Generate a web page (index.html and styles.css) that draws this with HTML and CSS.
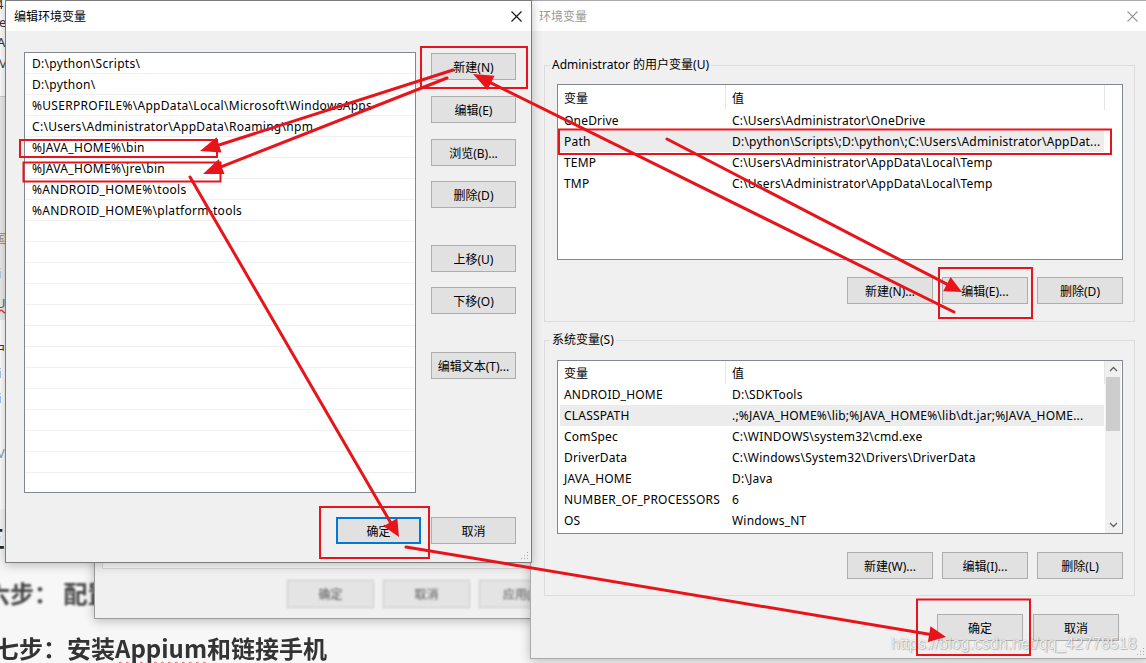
FILE: index.html
```html
<!DOCTYPE html>
<html lang="zh-CN">
<head>
    <meta charset="UTF-8">
    <title>环境变量</title>
    <link rel="stylesheet" href="styles.css">
</head>
<body>
<div class="desk">
    <!-- blog page that sits behind the dialogs -->
    <div class="page">
        <div class="strip">
            <span class="frag f1">4</span>
            <span class="frag f2">re</span>
            <span class="frag f3">A</span>
            <span class="frag f4">M</span>
            <span class="frag f5">国</span>
            <span class="frag f6">i</span>
            <span class="frag f7">U</span>
            <span class="frag f8">中</span>
            <span class="frag f9">i</span>
            <span class="frag f10">i</span>
            <span class="frag f11">V</span>
        </div>
        <h3 class="step s5">五</h3>
        <h3 class="step s6">六步： 配置</h3>
        <h3 class="step s7">七步：安装<span class="typo">Appium</span>和链接手机</h3>
    </div>

    <!-- 系统属性 window, mostly hidden -->
    <div class="win sys-win">
        <div class="sys-panel"></div>
        <div class="sys-foot">
            <button class="btn">确定</button>
            <button class="btn">取消</button>
            <button class="btn">应用(A)</button>
        </div>
    </div>

    <!-- 环境变量 -->
    <div class="win env-win">
        <div class="titlebar inactive">
            <span class="title">环境变量</span>
            <svg class="close" width="11" height="11" viewBox="0 0 11 11"><path d="M0.5 0.5L10.5 10.5M10.5 0.5L0.5 10.5"/></svg>
        </div>
        <div class="env-body">
            <fieldset class="group g-user">
                <legend>Administrator 的用户变量(U)</legend>
                <div class="lv lv-user">
                    <div class="lv-main">
                        <div class="lv-head"><span class="h1">变量</span><span class="h2">值</span></div>
                        <div class="lv-row"><span class="c1">OneDrive</span><span class="c2">C:\Users\Administrator\OneDrive</span></div>
                        <div class="lv-row sel"><span class="c1">Path</span><span class="c2">D:\python\Scripts\;D:\python\;C:\Users\Administrator\AppDat...</span></div>
                        <div class="lv-row"><span class="c1">TEMP</span><span class="c2">C:\Users\Administrator\AppData\Local\Temp</span></div>
                        <div class="lv-row"><span class="c1">TMP</span><span class="c2">C:\Users\Administrator\AppData\Local\Temp</span></div>
                    </div>
                </div>
                <div class="btn-row">
                    <button class="btn w86">新建(N)...</button>
                    <button class="btn w86">编辑(E)...</button>
                    <button class="btn w86">删除(D)</button>
                </div>
            </fieldset>

            <fieldset class="group g-sys">
                <legend>系统变量(S)</legend>
                <div class="lv lv-sys">
                    <div class="lv-main">
                        <div class="lv-head"><span class="h1">变量</span><span class="h2">值</span></div>
                        <div class="lv-row"><span class="c1">ANDROID_HOME</span><span class="c2">D:\SDKTools</span></div>
                        <div class="lv-row sel"><span class="c1">CLASSPATH</span><span class="c2">.;%JAVA_HOME%\lib;%JAVA_HOME%\lib\dt.jar;%JAVA_HOME...</span></div>
                        <div class="lv-row"><span class="c1">ComSpec</span><span class="c2">C:\WINDOWS\system32\cmd.exe</span></div>
                        <div class="lv-row"><span class="c1">DriverData</span><span class="c2">C:\Windows\System32\Drivers\DriverData</span></div>
                        <div class="lv-row"><span class="c1">JAVA_HOME</span><span class="c2">D:\Java</span></div>
                        <div class="lv-row"><span class="c1">NUMBER_OF_PROCESSORS</span><span class="c2">6</span></div>
                        <div class="lv-row"><span class="c1">OS</span><span class="c2">Windows_NT</span></div>
                    </div>
                    <div class="vscroll">
                        <div class="arrow"><svg width="9" height="6" viewBox="0 0 9 6"><path d="M1 5L4.5 1.5L8 5"/></svg></div>
                        <div class="track"><div class="thumb"></div></div>
                        <div class="arrow"><svg width="9" height="6" viewBox="0 0 9 6"><path d="M1 1L4.5 4.5L8 1"/></svg></div>
                    </div>
                </div>
                <div class="btn-row">
                    <button class="btn w86">新建(W)...</button>
                    <button class="btn w86">编辑(I)...</button>
                    <button class="btn w86">删除(L)</button>
                </div>
            </fieldset>

            <div class="env-foot">
                <button class="btn w86">确定</button>
                <button class="btn w86">取消</button>
            </div>
        </div>
        <svg class="grip" width="10" height="10" viewBox="0 0 10 10"><path d="M8 2h1v1H8zM5 5h1v1H5zM8 5h1v1H8zM2 8h1v1H2zM5 8h1v1H5zM8 8h1v1H8z"/></svg>
    </div>

    <!-- 编辑环境变量 -->
    <div class="win edit-win">
        <div class="titlebar">
            <span class="title">编辑环境变量</span>
            <svg class="close" width="11" height="11" viewBox="0 0 11 11"><path d="M0.5 0.5L10.5 10.5M10.5 0.5L0.5 10.5"/></svg>
        </div>
        <div class="edit-body">
            <div class="edit-main">
                <div class="listbox">
                    <div class="lb-row">D:\python\Scripts\</div>
                    <div class="lb-row">D:\python\</div>
                    <div class="lb-row">%USERPROFILE%\AppData\Local\Microsoft\WindowsApps</div>
                    <div class="lb-row">C:\Users\Administrator\AppData\Roaming\npm</div>
                    <div class="lb-row">%JAVA_HOME%\bin</div>
                    <div class="lb-row">%JAVA_HOME%\jre\bin</div>
                    <div class="lb-row">%ANDROID_HOME%\tools</div>
                    <div class="lb-row">%ANDROID_HOME%\platform-tools</div>
                    <div class="lb-row"></div>
                    <div class="lb-row"></div>
                    <div class="lb-row"></div>
                    <div class="lb-row"></div>
                    <div class="lb-row"></div>
                    <div class="lb-row"></div>
                    <div class="lb-row"></div>
                    <div class="lb-row"></div>
                    <div class="lb-row"></div>
                    <div class="lb-row"></div>
                    <div class="lb-row"></div>
                    <div class="lb-row"></div>
                </div>
                <div class="side-btns">
                    <button class="btn">新建(N)</button>
                    <button class="btn gap">编辑(E)</button>
                    <button class="btn gap">浏览(B)...</button>
                    <button class="btn gap2">删除(D)</button>
                    <button class="btn gap-l">上移(U)</button>
                    <button class="btn gap2">下移(O)</button>
                    <button class="btn gap-xl">编辑文本(T)...</button>
                </div>
            </div>
            <div class="edit-foot">
                <button class="btn primary">确定</button>
                <button class="btn">取消</button>
            </div>
        </div>
        <svg class="grip" width="10" height="10" viewBox="0 0 10 10"><path d="M8 2h1v1H8zM5 5h1v1H5zM8 5h1v1H8zM2 8h1v1H2zM5 8h1v1H5zM8 8h1v1H8z"/></svg>
    </div>

    <div class="watermark">https://blog.csdn.net/qq_42778518</div>

    <!-- red markup drawn on top -->
    <svg class="marks" width="1146" height="663" viewBox="0 0 1146 663">
        <g fill="none" stroke="#e8141b" stroke-width="2">
            <rect x="421" y="47" width="106" height="41"/>
            <rect x="20" y="140" width="197" height="17"/>
            <rect x="23.5" y="162.5" width="197" height="19"/>
            <rect x="559" y="129.5" width="552" height="24.5"/>
            <rect x="939" y="268" width="93" height="50"/>
            <rect x="320" y="507" width="109" height="51"/>
            <rect x="917" y="599.5" width="113" height="55.5"/>
        </g>
        <g stroke="#e8141b" stroke-width="3" stroke-linecap="round">
            <line x1="453" y1="70" x2="219" y2="145"/>
            <line x1="447" y1="78" x2="221.6" y2="166.7"/>
            <line x1="954" y1="312" x2="490.9" y2="82.9"/>
            <line x1="667" y1="139" x2="946.9" y2="284.2"/>
            <line x1="190" y1="177" x2="390.4" y2="522.3"/>
            <line x1="406" y1="547" x2="929.2" y2="634.2"/>
        </g>
        <g fill="#e8141b">
            <polygon points="200,151 216.6,137.3 221.5,152.5"/>
            <polygon points="203,174 218.7,159.2 224.5,174.1"/>
            <polygon points="473,74 494.5,75.7 487.4,90.1"/>
            <polygon points="962,292 943.2,291.3 950.6,277.1"/>
            <polygon points="399,537 383.5,526.3 397.3,518.3"/>
            <polygon points="946,637 927.9,642.1 930.5,626.3"/>
        </g>
    </svg>
</div>
</body>
</html>
```

FILE: styles.css
```css
/* Desktop */
* {
    box-sizing: border-box;
}

body {
    margin: 0;
    font-family: 'Noto Sans', 'Noto Sans CJK SC', sans-serif;
    font-size: 12px;
    color: #000;
    background: #f4f4f4;
}

.desk {
    position: relative;
    width: 1146px;
    height: 663px;
    overflow: hidden;
}

/* Page behind the windows */
.page {
    display: flex;
    flex-direction: column;
    height: 100%;
    background: #f7f7f7;
}

.page > * {
    flex-shrink: 0;
}

.strip {
    position: relative;
    height: 509px;
    background: linear-gradient(#fff 0 96px, #cfcfcf 96px 97px, #ececec 97px 320px, #fff 320px);
    color: #333;
    font-size: 13px;
}

.frag {
    display: block;
    height: 0;
    line-height: 0;
}

.f1 { margin-top: 4px; margin-left: -4px; }
.f2 { margin-top: 18px; margin-left: -6px; }
.f3 { margin-top: 20px; margin-left: -3px; }
.f4 { margin-top: 21px; margin-left: -3px; }
.f5 { margin-top: 175px; margin-left: -6px; color: #999; }
.f6 { margin-top: 35px; margin-left: -2px; color: #888; }
.f7 { margin-top: 30px; margin-left: -4px; color: #666; text-decoration: underline wavy #d33; }
.f8 { margin-top: 45px; margin-left: -8px; }
.f9 { margin-top: 25px; margin-left: -2px; color: #7a2a4a; }
.f10 { margin-top: 25px; margin-left: -2px; color: #7a2a4a; }
.f11 { margin-top: 55px; margin-left: -3px; color: #999; }

.step {
    margin: 0;
    height: 55.5px;
    line-height: 55.5px;
    font-size: 24px;
    font-weight: 700;
    color: #2a2a2a;
    white-space: nowrap;
    font-family: 'Noto Sans CJK SC', sans-serif;
}

.s5 { margin-left: -19px; }
.s6 { margin-left: -14px; filter: blur(1px); color: #444; }
.s7 { margin-left: -5px; filter: blur(0.7px); color: #333; }

.typo {
    text-decoration: underline wavy #e06060;
    text-decoration-thickness: 1px;
    text-underline-offset: 3px;
}

/* Windows */
.win {
    position: absolute;
    background: #f0f0f0;
    border: 1px solid #9a9a9a;
    box-shadow: 0 2px 10px rgba(0, 0, 0, 0.25);
}

.titlebar {
    height: 30px;
    background: #fff;
    display: flex;
    align-items: center;
    justify-content: space-between;
    padding: 0 9px 0 8px;
}

.titlebar .close path {
    stroke: #111;
    stroke-width: 1.1;
    fill: none;
}

.titlebar.inactive .title {
    color: #999;
}

.titlebar.inactive .close path {
    stroke: #999;
}

.grip {
    position: absolute;
    right: 2px;
    bottom: 2px;
    fill: #a8a8a8;
}

.btn {
    display: flex;
    align-items: center;
    justify-content: center;
    height: 27px;
    padding: 0;
    background: #e1e1e1;
    border: 1px solid #adadad;
    font: inherit;
    color: #000;
}

.btn.primary {
    border: 2px solid #0078d7;
}

/* 系统属性 */
.sys-win {
    left: 94px;
    top: 280px;
    width: 482px;
    height: 339px;
    z-index: 1;
    display: flex;
    flex-direction: column;
    padding: 0 9px 10px 7px;
}

.sys-panel {
    flex: 1;
    background: #fbfbfb;
    border: 1px solid #d9d9d9;
}

.sys-foot {
    display: flex;
    justify-content: flex-end;
    gap: 9px;
    margin-top: 11px;
}

.sys-foot .btn {
    width: 87px;
    height: 28px;
    color: #555;
    filter: blur(1px);
    background: #e4e4e4;
    border-color: #c8c8c8;
}

/* 编辑环境变量 */
.edit-win {
    left: 5px;
    top: 0;
    width: 527px;
    height: 563px;
    z-index: 3;
    border-color: #7c7c7c;
}

.edit-body {
    padding: 21px 15px 18px 18px;
}

.edit-main {
    display: flex;
    gap: 15px;
}

.listbox {
    width: 392px;
    height: 441px;
    background: #fff;
    border: 1px solid #828790;
}

.lb-row {
    height: 21px;
    line-height: 22px;
    padding-left: 7px;
    border-bottom: 1px solid #f0f0f0;
    white-space: nowrap;
    letter-spacing: 0.3px;
}

.side-btns {
    display: flex;
    flex-direction: column;
    width: 85px;
    padding-top: 1px;
}

.side-btns .gap { margin-top: 16px; }
.side-btns .gap2 { margin-top: 15px; }
.side-btns .gap-l { margin-top: 37px; }
.side-btns .gap-xl { margin-top: 38px; }

.edit-foot {
    display: flex;
    justify-content: flex-end;
    gap: 10px;
    margin-top: 24px;
}

.edit-foot .btn {
    width: 85px;
}

/* 环境变量 */
.env-win {
    left: 530px;
    top: 0;
    width: 618px;
    height: 659px;
    z-index: 2;
    border-color: #aaa;
}

.env-body {
    padding: 26px 12px 17px 13px;
}

.group {
    margin: 0;
    border: 1px solid #dcdcdc;
    padding: 11px 11px 17px 12px;
}

.group legend {
    line-height: 16px;
    padding: 0 2px;
    margin-left: -7px;
}

.g-sys {
    margin-top: 10px;
    padding-top: 12px;
    padding-bottom: 16px;
}

.lv {
    display: flex;
    background: #fff;
    border: 1px solid #828790;
    height: 176px;
}

.lv-sys {
    height: 174px;
}

.lv-main {
    width: 547px;
}

.lv-head {
    display: flex;
    height: 25px;
    align-items: center;
}

.lv-sys .lv-head {
    height: 23px;
}

.lv-head span {
    height: 100%;
    display: flex;
    align-items: center;
    padding-left: 6px;
    border-right: 1px solid #e5e5e5;
}

.lv-head .h1 { width: 168px; }
.lv-head .h2 { width: 379px; }

.lv-row {
    display: flex;
    align-items: center;
    height: 21px;
    width: 544px;
    margin-left: 2px;
    white-space: nowrap;
    letter-spacing: 0.2px;
}

.lv-row.sel {
    background: #ececec;
}

.lv-row .c1 {
    width: 165px;
    padding-left: 4px;
    overflow: hidden;
}

.lv-row .c2 {
    flex: 1;
    padding-left: 7px;
    overflow: hidden;
}

.vscroll {
    width: 16px;
    display: flex;
    flex-direction: column;
    background: #f0f0f0;
}

.vscroll .arrow {
    height: 16px;
    display: flex;
    align-items: center;
    justify-content: center;
}

.vscroll .arrow:last-child {
    height: 17px;
}

.vscroll .arrow path {
    fill: none;
    stroke: #606060;
    stroke-width: 1.3;
}

.vscroll .track {
    flex: 1;
}

.vscroll .thumb {
    height: 54px;
    margin: 0 1px;
    background: #cdcdcd;
}

.btn-row {
    display: flex;
    justify-content: flex-end;
    gap: 9px;
    margin-top: 17px;
}

.g-sys .btn-row {
    margin-top: 18px;
}

.btn.w86 {
    width: 86px;
}

.env-foot {
    display: flex;
    justify-content: flex-end;
    gap: 10px;
    margin-top: 18px;
    padding-right: 16px;
}

/* Overlays */
.watermark {
    position: absolute;
    left: 891px;
    top: 635px;
    z-index: 5;
    font-family: 'Liberation Sans', sans-serif;
    font-size: 16px;
    color: rgba(255, 255, 255, 0.85);
    text-shadow: 0 0 1px rgba(0, 0, 0, 0.35), 1px 1px 1px rgba(0, 0, 0, 0.2);
    white-space: nowrap;
}

.marks {
    position: absolute;
    left: 0;
    top: 0;
    z-index: 10;
    pointer-events: none;
}
```
